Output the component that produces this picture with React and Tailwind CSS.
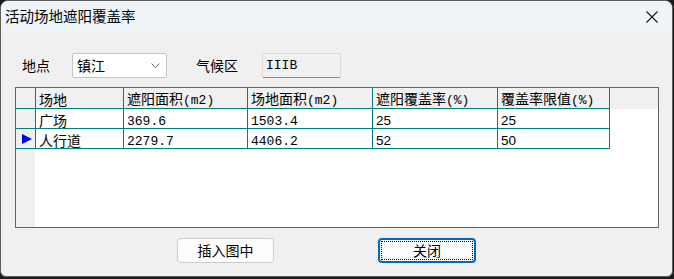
const cjk = "font-['Noto_Sans_CJK_SC',sans-serif]";

const columns = [
  { title: "场地", w: "w-[88px]" },
  { title: "遮阳面积(m2)", w: "w-[124px]" },
  { title: "场地面积(m2)", w: "w-[125px]" },
  { title: "遮阳覆盖率(%)", w: "w-[125px]" },
  { title: "覆盖率限值(%)", w: "w-[112px]" },
];

const rows = [
  { cells: ["广场", "369.6", "1503.4", "25", "25"], current: false },
  { cells: ["人行道", "2279.7", "4406.2", "52", "50"], current: true },
];

// mixed text: CJK runs in Noto, ascii runs in a narrow mono like SimSun's half-width
function Txt({ s, sans }) {
  const parts = s.split(/([\x00-\x7f]+)/).filter(Boolean);
  return (
    <span className="whitespace-nowrap">
      {parts.map((p, i) =>
        /^[\x00-\x7f]+$/.test(p) ? (
          <span
            key={i}
            className={
              sans
                ? "font-['Liberation_Sans',sans-serif] text-[13.5px]"
                : "font-['Liberation_Mono',monospace] text-[13px]"
            }
          >
            {p}
          </span>
        ) : (
          <span key={i} className="text-[14px]">{p}</span>
        )
      )}
    </span>
  );
}

function Grid() {
  return (
    <div className="ml-[14px] w-[644px] mt-[9px] h-[141px] border border-[#646464] bg-white flex flex-col">
      <div className="flex h-[21px] bg-[#f0f0f0]">
        <div className="w-[20px] border-r border-b border-[#008080]" />
        {columns.map((c) => (
          <div key={c.title} className={`${c.w} border-r border-b border-[#008080] pl-[3px] flex items-center`}>
            <Txt s={c.title} />
          </div>
        ))}
      </div>
      {rows.map((r, ri) => (
        <div key={ri} className="flex h-[20px]">
          <div className="w-[20px] bg-[#f0f0f0] border-r border-b border-[#008080] flex items-center pl-[6px]">
            {r.current && (
              <svg width="10" height="10" viewBox="0 0 10 10">
                <polygon points="0,0 10,5 0,10" fill="#0000ff" />
              </svg>
            )}
          </div>
          {r.cells.map((v, ci) => (
            <div
              key={ci}
              className={`${columns[ci].w} border-r border-b border-[#008080] pl-[3px] flex items-center`}
            >
              <Txt s={v} sans={ci >= 3} />
            </div>
          ))}
        </div>
      ))}
      <div className="flex-1 flex">
        <div className="w-[19px] bg-[#f0f0f0]" />
      </div>
    </div>
  );
}

export default function App() {
  return (
    <div className={`w-[674px] h-[279px] bg-[#1c1c1c] ${cjk} text-black`}>
      <div className="w-[673px] h-[277px] rounded-t-lg rounded-b-md border border-[#5c5c5c] bg-[#f0f0f0] overflow-hidden flex flex-col">
        <div className="h-[31px] bg-[#eef4f8] flex items-center justify-between pl-[4px] pr-[14px]">
          <span className="text-[14.5px] leading-none pb-[1px]">活动场地遮阳覆盖率</span>
          <svg width="12" height="12" viewBox="0 0 12 12" className="mt-[1px]">
            <path d="M0.5 0.5 L11.5 11.5 M11.5 0.5 L0.5 11.5" stroke="#1a1a1a" strokeWidth="1.1" />
          </svg>
        </div>

        <div className="flex items-center h-[25px] mt-[21px]">
          <span className="ml-[21px] w-[50px] text-[14px]">地点</span>
          <div className="w-[95px] h-[25px] bg-white border border-[#c6c6c6] rounded-[2px] flex items-center justify-between pl-[4px] pr-[6px]">
            <span className="text-[14px]">镇江</span>
            <svg width="9" height="5" viewBox="0 0 9 5">
              <polyline points="0.5,0.5 4.5,4.5 8.5,0.5" fill="none" stroke="#6a6a6a" strokeWidth="1" />
            </svg>
          </div>
          <span className="ml-[29px] w-[66px] text-[14px]">气候区</span>
          <div className="w-[79px] h-[25px] bg-[#f0f0f0] border border-[#dcdcdc] border-b-[#8c8c8c] rounded-[2px] flex items-center pl-[3px]">
            <span className="font-['Liberation_Mono',monospace] text-[13px]">IIIB</span>
          </div>
        </div>

        <Grid />

        <div className="flex mt-[10px] ml-[176px] gap-[104px]">
          <button className="w-[97px] h-[25px] bg-[#fdfdfd] border border-[#cccccc] rounded-[4px] text-[14px] flex items-center justify-center">
            插入图中
          </button>
          <button className="w-[98px] h-[25px] bg-[#fdfdfd] border-2 border-[#0067c0] rounded-[4px] text-[14px] flex items-center justify-center p-[1px]">
            <span className="w-full h-full border border-dotted border-black flex items-center justify-center">关闭</span>
          </button>
        </div>
      </div>
    </div>
  );
}
